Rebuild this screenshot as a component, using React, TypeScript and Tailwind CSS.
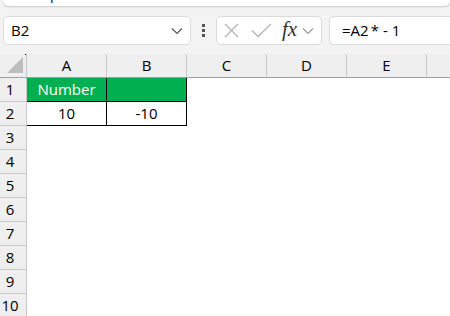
import React from 'react';

const COLS = ['A', 'B', 'C', 'D', 'E', ''];
const ROWS = [1, 2, 3, 4, 5, 6, 7, 8, 9, 10];

function Chevron({ className }: { className?: string }) {
  return (
    <svg width="12" height="8" viewBox="0 0 12 8" className={className}>
      <path d="M1 1.5 L6 6.5 L11 1.5" fill="none" stroke="currentColor" strokeWidth="1.2" />
    </svg>
  );
}

function Cell({ row, col }: { row: number; col: string }) {
  const inTable = row <= 2 && (col === 'A' || col === 'B');
  if (!inTable) {
    return <div className="w-[80px] h-full shrink-0 bg-white" />;
  }
  const green = row === 1;
  let text = '';
  if (row === 1 && col === 'A') text = 'Number';
  if (row === 2 && col === 'A') text = '10';
  if (row === 2 && col === 'B') text = '-10';
  return (
    <div
      className={`w-[80px] h-full shrink-0 border-r border-b border-black flex items-center justify-center text-[15px] ${
        green ? 'bg-[#00b050] text-white' : 'bg-white text-black'
      }`}
    >
      {text}
    </div>
  );
}

export default function App() {
  return (
    <div
      className="w-[450px] h-[316px] overflow-hidden bg-white flex flex-col"
      style={{ fontFamily: '"Open Sans", "Noto Sans", sans-serif' }}
    >
      {/* toolbar */}
      <div className="bg-[#f3f3f3] h-[54px] shrink-0 flex flex-col">
        <div className="ml-[3px] h-[6px] bg-white rounded-b-lg shadow-[0_1px_2px_rgba(0,0,0,0.18)] overflow-hidden relative">
          <span className="absolute left-[47px] -top-[13px] text-[14px] text-black leading-none">p</span>
        </div>
        <div className="flex items-center mt-[10px] h-[29px]">
          <div className="ml-[3px] w-[188px] h-full bg-white border border-[#dadada] rounded-[5px] flex items-center pl-[7px] pr-[7px]">
            <span className="text-[15px] text-black flex-1">B2</span>
            <Chevron className="text-[#555]" />
          </div>
          <div className="w-[25px] h-full flex flex-col items-center justify-center gap-[2px]">
            <span className="w-[3px] h-[3px] bg-[#555]" />
            <span className="w-[3px] h-[3px] bg-[#555]" />
            <span className="w-[3px] h-[3px] bg-[#555]" />
          </div>
          <div className="w-[106px] h-full bg-white border border-[#dadada] rounded-[5px] flex items-center pl-[6px]">
            <svg width="17" height="17" viewBox="0 0 17 17" className="text-[#b4b4b4]">
              <path d="M2 2 L15 15 M15 2 L2 15" stroke="currentColor" strokeWidth="1.3" fill="none" />
            </svg>
            <svg width="21" height="15" viewBox="0 0 21 15" className="ml-[11px] text-[#b4b4b4]">
              <path d="M1 7.5 L7 13.5 L20 1" stroke="currentColor" strokeWidth="1.3" fill="none" />
            </svg>
            <span
              className="ml-[10px] text-[21px] italic text-[#333] leading-none -mt-[2px]"
              style={{ fontFamily: '"Liberation Serif", "DejaVu Serif", serif' }}
            >
              fx
            </span>
            <Chevron className="ml-[5px] text-[#9a9a9a]" />
          </div>
          <div className="ml-[7px] flex-1 h-full bg-white border border-[#dadada] border-r-0 rounded-l-[5px] flex items-center pl-[12px]">
            <span className="text-[15px] text-black">
              =A2<span className="ml-[2px]">*</span>
              <span className="mx-[4px]">-</span>1
            </span>
          </div>
        </div>
      </div>

      {/* column headers */}
      <div className="flex h-[24px] shrink-0 bg-[#efefef] border-b border-[#a0a0a0]">
        <div className="w-[27px] shrink-0 h-full border-r border-[#c8c8c8] relative flex items-end justify-end p-[4px] pr-[3px]">
          <svg width="16" height="16" viewBox="0 0 16 16">
            <path d="M16 0 L16 16 L0 16 Z" fill="#bdbdbd" />
          </svg>
          <span className="absolute right-[0px] top-0 w-[1px] h-[1px] bg-black" />
        </div>
        {COLS.map((c, i) => (
          <div
            key={i}
            className="w-[80px] shrink-0 h-full border-r border-[#c8c8c8] flex items-center justify-center text-[15px] text-black"
          >
            {c}
          </div>
        ))}
      </div>

      {/* rows */}
      {ROWS.map((r) => (
        <div key={r} className="flex h-[24px] shrink-0">
          <div className="w-[27px] shrink-0 h-full bg-[#efefef] border-r border-b border-[#c8c8c8] flex items-center justify-center pr-[6px] text-[15px] text-black">
            {r}
          </div>
          {COLS.map((c, i) => (
            <Cell key={i} row={r} col={c} />
          ))}
        </div>
      ))}
    </div>
  );
}
